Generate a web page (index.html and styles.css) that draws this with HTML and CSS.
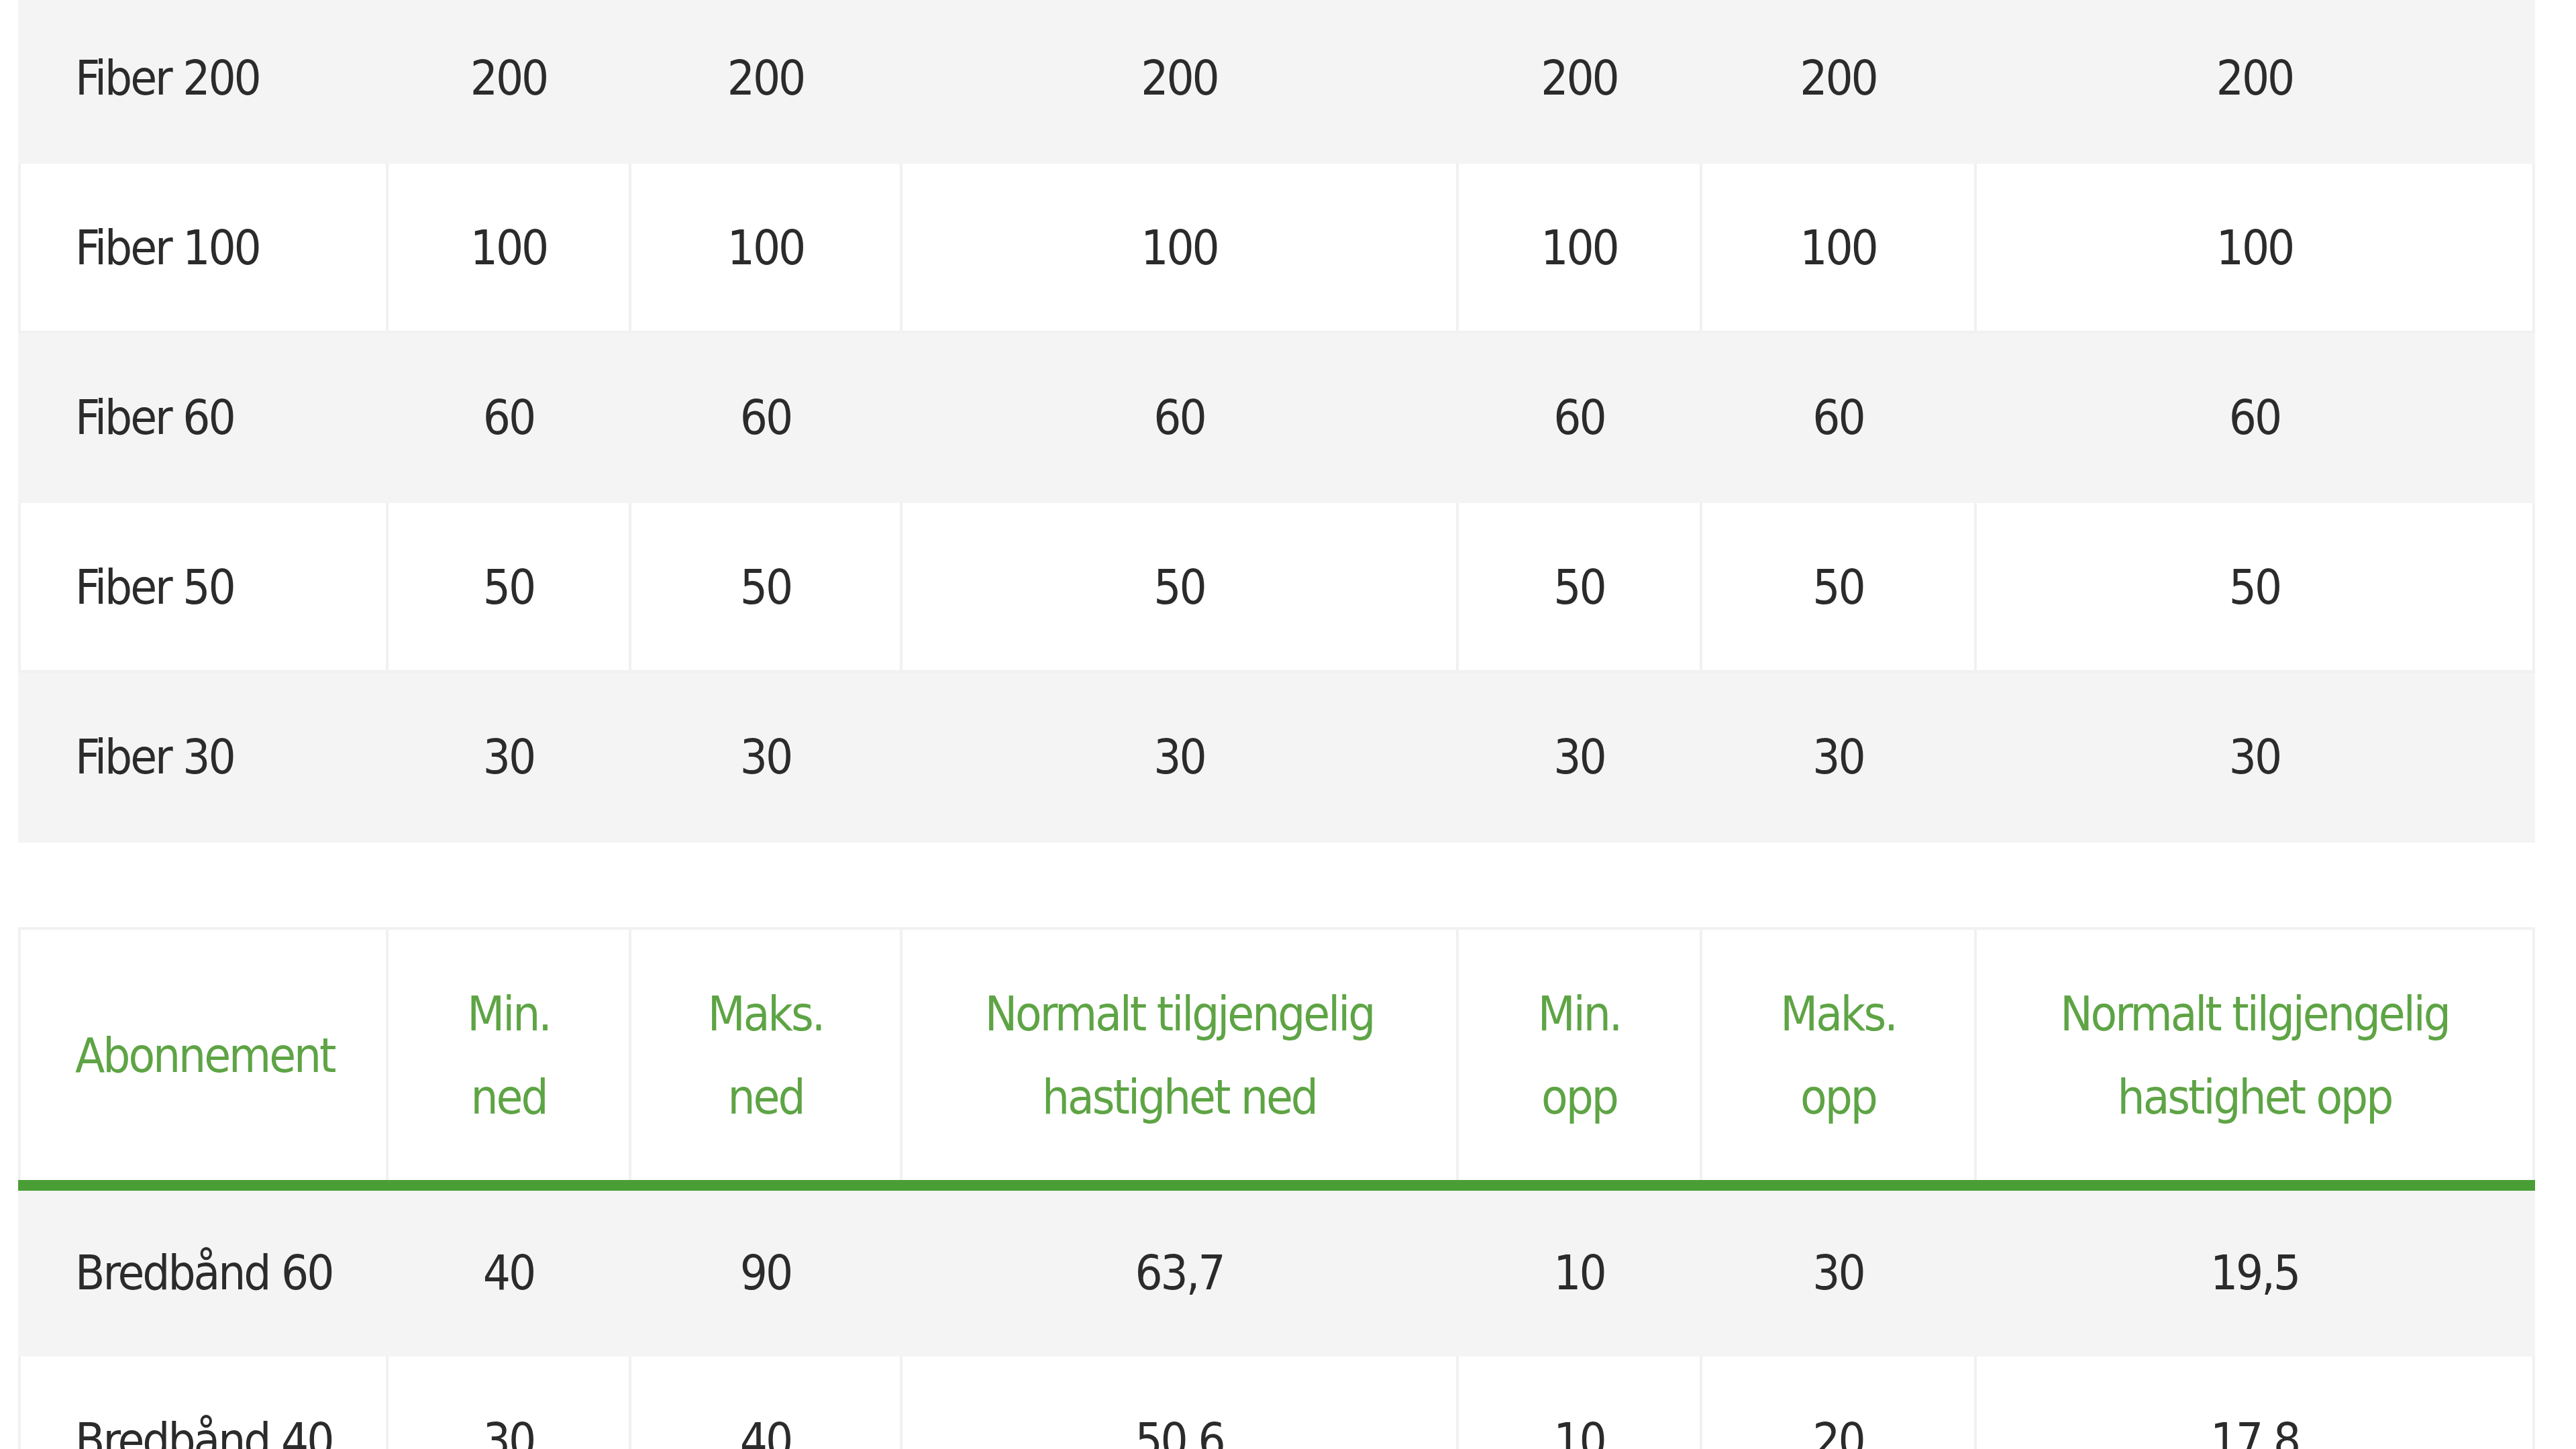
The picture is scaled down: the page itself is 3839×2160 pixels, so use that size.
FILE: index.html
```html
<!DOCTYPE html>
<html lang="no">
<head>
<meta charset="utf-8">
<title>Hastigheter</title>
<link rel="stylesheet" href="styles.css">
</head>
<body>
<div class="page">
  <table class="speed speed-fiber">
    <colgroup>
      <col class="c-name"><col class="c-min"><col class="c-max"><col class="c-norm">
      <col class="c-min2"><col class="c-max2"><col class="c-norm2">
    </colgroup>
    <tbody>
      <tr><td>Fiber 200</td><td>200</td><td>200</td><td>200</td><td>200</td><td>200</td><td>200</td></tr>
      <tr><td>Fiber 100</td><td>100</td><td>100</td><td>100</td><td>100</td><td>100</td><td>100</td></tr>
      <tr><td>Fiber 60</td><td>60</td><td>60</td><td>60</td><td>60</td><td>60</td><td>60</td></tr>
      <tr><td>Fiber 50</td><td>50</td><td>50</td><td>50</td><td>50</td><td>50</td><td>50</td></tr>
      <tr><td>Fiber 30</td><td>30</td><td>30</td><td>30</td><td>30</td><td>30</td><td>30</td></tr>
    </tbody>
  </table>

  <table class="speed speed-dsl">
    <colgroup>
      <col class="c-name"><col class="c-min"><col class="c-max"><col class="c-norm">
      <col class="c-min2"><col class="c-max2"><col class="c-norm2">
    </colgroup>
    <thead>
      <tr>
        <th>Abonnement</th>
        <th>Min.<br>ned</th>
        <th>Maks.<br>ned</th>
        <th>Normalt tilgjengelig<br>hastighet ned</th>
        <th>Min.<br>opp</th>
        <th>Maks.<br>opp</th>
        <th>Normalt tilgjengelig<br>hastighet opp</th>
      </tr>
    </thead>
    <tbody>
      <tr><td>Bredbånd 60</td><td>40</td><td>90</td><td>63,7</td><td>10</td><td>30</td><td>19,5</td></tr>
      <tr><td>Bredbånd 40</td><td>30</td><td>40</td><td>50,6</td><td>10</td><td>20</td><td>17,8</td></tr>
    </tbody>
  </table>
</div>
</body>
</html>
```

FILE: styles.css
```css
html, body {
  margin: 0;
  padding: 0;
  background: #ffffff;
  overflow: hidden;
}

body {
  font-family: "DejaVu Sans Condensed", "DejaVu Sans", sans-serif;
  font-stretch: condensed;
  color: #2b2b2b;
}

.page {
  margin-top: -13px;
  padding-left: 27px;
}

.speed {
  width: 3747px;
  table-layout: fixed;
  border-collapse: collapse;
  font-size: 72px;
  letter-spacing: -3px;
}

.speed-dsl {
  margin-top: 126px;
}

.c-name { width: 548px; }
.c-min { width: 362px; }
.c-max { width: 404px; }
.c-norm { width: 829px; }
.c-min2 { width: 363px; }
.c-max2 { width: 409px; }
.c-norm2 { width: 832px; }

.speed td,
.speed th {
  border: 4px solid #f1f1f1;
  text-align: center;
  vertical-align: middle;
  padding: 0 16px;
  font-weight: normal;
  white-space: nowrap;
}

.speed td:first-child,
.speed th:first-child {
  text-align: left;
  padding-left: 81px;
}

.speed tbody tr {
  height: 253px;
}

.speed tbody tr:nth-child(odd) {
  background: #f4f4f4;
}

.speed tbody tr:nth-child(odd) td {
  border-color: #f4f4f4;
}

.speed thead th {
  height: 373px;
  color: #5ea445;
  line-height: 124px;
  border-bottom: 16px solid #4a9e36;
  background: #ffffff;
}
```
